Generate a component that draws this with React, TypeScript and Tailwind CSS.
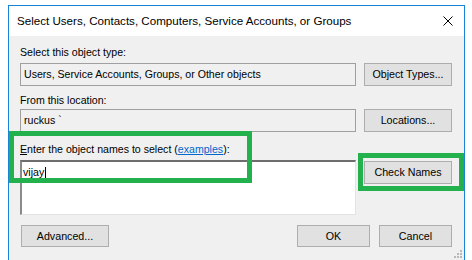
import React from 'react';

const font = { fontFamily: '"Liberation Sans", Arial, sans-serif' };

const Btn: React.FC<{ label: string; className?: string }> = ({ label, className }) => (
  <button
    className={`flex items-center justify-center border border-[#adadad] bg-[#e1e1e1] text-[10.7px] text-black ${className ?? ''}`}
  >
    {label}
  </button>
);

const ReadBox: React.FC<{ value: string }> = ({ value }) => (
  <div className="flex h-[23px] w-[336px] items-center border border-[#a0a0a0] bg-[#f0f0f0] pl-[3px] text-black">
    {value}
  </div>
);

export default function App() {
  return (
    <div className="relative h-[260px] w-[472px] overflow-hidden bg-white" style={font}>
      <div className="ml-[8px] mt-[5px] h-[255px] w-[457px] border-x border-t border-[#1883d7]">
        {/* title bar */}
        <div className="flex h-[30px] items-center justify-between bg-white pl-[8px] pr-[10px]">
          <span className="text-[11.6px] text-black">
            Select Users, Contacts, Computers, Service Accounts, or Groups
          </span>
          <svg width="10" height="10" viewBox="0 0 10 10" className="mr-[1px]">
            <path d="M0.5 0.5 L9.5 9.5 M9.5 0.5 L0.5 9.5" stroke="#000" strokeWidth="1" />
          </svg>
        </div>

        {/* body */}
        <div className="relative h-[225px] bg-[#f0f0f0] pl-[11px] pr-[12px] pt-[10px] text-[10.6px] leading-[13px] text-black">
          <div>Select this object type:</div>
          <div className="mt-[4px] flex gap-[8px]">
            <ReadBox value="Users, Service Accounts, Groups, or Other objects" />
            <Btn label="Object Types..." className="h-[23px] w-[88px]" />
          </div>

          <div className="mt-[8px]">From this location:</div>
          <div className="mt-[2px] flex gap-[8px]">
            <ReadBox value="ruckus `" />
            <Btn label="Locations..." className="h-[23px] w-[88px]" />
          </div>

          <div className="mt-[11px]">
            <span className="underline">E</span>nter the object names to select (
            <span className="text-[#0066cc] underline">examples</span>):
          </div>
          <div className="mt-[4px] flex items-start gap-[8px]">
            <div className="h-[55px] w-[336px] border-l-2 border-t-2 border-b border-r border-l-[#8a8a8a] border-t-[#6d6d6d] border-b-[#e3e3e3] border-r-[#e3e3e3] bg-white pl-[1px] pt-[4px]">
              <span className="inline-flex items-center">
                vijay
                <span className="ml-[1px] inline-block h-[12px] w-px bg-black" />
              </span>
            </div>
            <Btn label="Check Names" className="mt-[1px] h-[23px] w-[88px]" />
          </div>

          <div className="mt-[10px] flex items-center justify-between">
            <Btn label="Advanced..." className="ml-px h-[22px] w-[88px]" />
            <div className="flex gap-[9px]">
              <Btn label="OK" className="h-[22px] w-[73px]" />
              <Btn label="Cancel" className="h-[22px] w-[73px]" />
            </div>
          </div>

          {/* size grip */}
          <svg width="8" height="8" viewBox="0 0 8 8" className="absolute bottom-[3px] right-[2px]">
            <rect x="6" y="0" width="2" height="2" fill="#b8b8b8" />
            <rect x="3" y="3" width="2" height="2" fill="#b8b8b8" />
            <rect x="6" y="3" width="2" height="2" fill="#b8b8b8" />
            <rect x="0" y="6" width="2" height="2" fill="#b8b8b8" />
            <rect x="3" y="6" width="2" height="2" fill="#b8b8b8" />
            <rect x="6" y="6" width="2" height="2" fill="#b8b8b8" />
          </svg>
        </div>
      </div>

      {/* green annotation boxes */}
      <div className="pointer-events-none absolute left-[9px] top-[131px] h-[52px] w-[243px] border-[5px] border-[#22b14c]" />
      <div className="pointer-events-none absolute left-[358px] top-[153px] h-[38px] w-[106px] border-[5px] border-[#22b14c]" />
    </div>
  );
}
